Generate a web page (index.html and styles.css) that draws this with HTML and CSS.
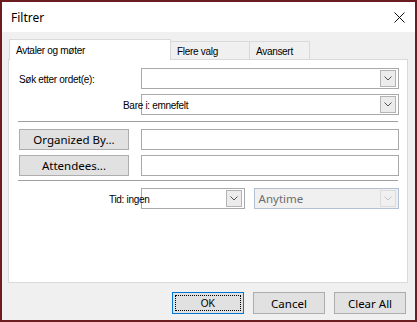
FILE: index.html
```html
<!DOCTYPE html>
<html lang="no">
<head>
    <meta charset="UTF-8">
    <meta name="viewport" content="width=device-width, initial-scale=1.0">
    <title>Filtrer</title>
    <link rel="stylesheet" href="styles.css">
</head>
<body>

<div class="window">
    <div class="titlebar">
        <span class="title">Filtrer</span>
        <svg class="close" width="11" height="11" viewBox="0 0 11 11">
            <path d="M0.5 0.5 L10.5 10.5 M10.5 0.5 L0.5 10.5" stroke="#111" stroke-width="1" fill="none"/>
        </svg>
    </div>

    <div class="content">
        <div class="tabs">
            <div class="tab active">Avtaler og møter</div>
            <div class="tab">Flere valg</div>
            <div class="tab">Avansert</div>
        </div>

        <div class="panel">
            <div class="row">
                <label class="label">Søk etter ordet(e):</label>
                <div class="combo grow">
                    <span class="drop"><svg width="8" height="5" viewBox="0 0 8 5"><path d="M0.5 0.5 L4 4 L7.5 0.5" stroke="#555" fill="none"/></svg></span>
                </div>
            </div>
            <div class="row">
                <label class="label overlay bare">Bare i: emnefelt</label>
                <div class="combo grow">
                    <span class="drop"><svg width="8" height="5" viewBox="0 0 8 5"><path d="M0.5 0.5 L4 4 L7.5 0.5" stroke="#555" fill="none"/></svg></span>
                </div>
            </div>

            <div class="sep"></div>

            <div class="row first">
                <div class="label"><button class="btn pick">Organized By...</button></div>
                <div class="textbox grow"></div>
            </div>
            <div class="row">
                <div class="label"><button class="btn pick">Attendees...</button></div>
                <div class="textbox grow"></div>
            </div>

            <div class="sep second"></div>

            <div class="row first">
                <label class="label overlay tid">Tid: ingen</label>
                <div class="combo time">
                    <span class="drop"><svg width="8" height="5" viewBox="0 0 8 5"><path d="M0.5 0.5 L4 4 L7.5 0.5" stroke="#555" fill="none"/></svg></span>
                </div>
                <div class="combo disabled anytime">
                    <span class="value">Anytime</span>
                    <span class="drop"><svg width="8" height="5" viewBox="0 0 8 5"><path d="M0.5 0.5 L4 4 L7.5 0.5" stroke="#c4c4c4" fill="none"/></svg></span>
                </div>
            </div>
        </div>

        <div class="footer">
            <button class="btn action ok"><span class="focus">OK</span></button>
            <button class="btn action">Cancel</button>
            <button class="btn action">Clear All</button>
        </div>
    </div>
</div>

</body>
</html>
```

FILE: styles.css
```css
body {
    margin: 0;
    font-family: "Liberation Sans", Arial, sans-serif;
    font-size: 10px;
    letter-spacing: -0.3px;
    color: #000;
}
.window {
    width: 417px;
    height: 322px;
    box-sizing: border-box;
    border: 2px solid #6a1c1e;
    display: flex;
    flex-direction: column;
    background-color: #f0f0f0;
}
.titlebar {
    height: 30px;
    background-color: #fff;
    display: flex;
    align-items: center;
    justify-content: space-between;
    padding: 0 10px 0 9px;
}
.title {
    font-family: "Noto Sans", sans-serif;
    font-size: 12px;
    letter-spacing: 0;
}
.close {
    margin-top: 1px;
}
.content {
    flex: 1;
    display: flex;
    flex-direction: column;
    padding: 7px 7px 0 6px;
}
.tabs {
    display: flex;
    align-items: flex-end;
    height: 20px;
}
.tab {
    box-sizing: border-box;
    height: 18px;
    border: 1px solid #d9d9d9;
    border-bottom: none;
    background-color: #f0f0f0;
    padding: 4px 0 0 6px;
    white-space: nowrap;
}
.tab.active {
    width: 162px;
    height: 21px;
    margin-left: 1px;
    margin-bottom: -1px;
    background-color: #fff;
    position: relative;
    z-index: 1;
    padding: 5px 0 0 6px;
}
.tab:nth-child(2) {
    width: 79px;
    border-left: none;
    padding-left: 6px;
}
.tab:nth-child(3) {
    width: 60px;
    border-left: none;
    padding-left: 6px;
}
.panel {
    box-sizing: border-box;
    height: 224px;
    background-color: #fff;
    border: 1px solid #d9d9d9;
    padding: 8px 8px 0 0;
}
.row {
    display: flex;
    align-items: center;
    height: 21px;
    margin-top: 5px;
}
.panel > .row:first-child {
    margin-top: 0;
}
.row.first {
    margin-top: 7px;
}
.label {
    flex-shrink: 0;
    width: 132px;
    box-sizing: border-box;
    padding: 2px 0 0 10px;
    white-space: nowrap;
}
.overlay {
    position: relative;
    z-index: 1;
}
.bare {
    padding-left: 114px;
}
.tid {
    padding-left: 100px;
}
.grow {
    flex: 1;
}
.combo, .textbox {
    box-sizing: border-box;
    height: 21px;
    border: 1px solid #a9a9a9;
    background-color: #fff;
    display: flex;
    align-items: center;
    justify-content: flex-end;
    padding-right: 2px;
}
.drop {
    box-sizing: border-box;
    width: 16px;
    height: 17px;
    border: 1px solid #b4b4b4;
    background-color: #ececec;
    display: flex;
    align-items: center;
    justify-content: center;
}
.time {
    width: 104px;
}
.anytime {
    width: 146px;
    margin-left: 9px;
    justify-content: space-between;
}
.disabled {
    background-color: #f0f0f0;
    border-color: #b3c0d2;
}
.disabled .drop {
    background-color: #f0f0f0;
    border-color: #dcdcdc;
}
.value {
    padding-left: 4px;
    font-family: "Noto Sans", sans-serif;
    font-size: 11.5px;
    letter-spacing: 0;
    color: #6d6d6d;
}
.sep {
    height: 1px;
    background-color: #a0a0a0;
    margin: 6px 1px 0 9px;
}
.sep.second {
    margin-top: 4px;
}
.btn {
    box-sizing: border-box;
    height: 21px;
    border: 1px solid #adadad;
    background-color: #e1e1e1;
    font-family: "Noto Sans", sans-serif;
    font-size: 11.5px;
    letter-spacing: 0;
    color: #000;
    padding: 0;
}
.pick {
    width: 110px;
    margin-top: -2px;
}
.footer {
    display: flex;
    justify-content: flex-end;
    gap: 9px;
    padding: 9px 2px 0 0;
}
.action {
    width: 72px;
    height: 22px;
}
.ok {
    border-color: #0078d7;
    padding: 2px;
}
.focus {
    display: flex;
    align-items: center;
    justify-content: center;
    height: 100%;
    border: 1px dotted #000;
    box-sizing: border-box;
    font-family: "Liberation Sans", Arial, sans-serif;
    font-size: 10px;
}
```
